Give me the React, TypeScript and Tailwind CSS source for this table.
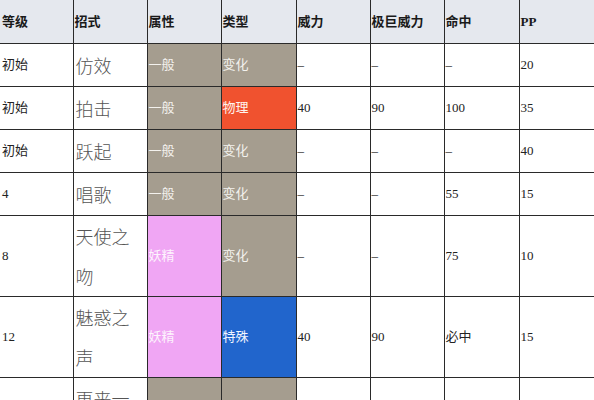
import type { ReactNode } from 'react';

type Tone = 'plain' | 'gray' | 'red' | 'pink' | 'blue';

interface Move {
    level: string;
    name: string;
    attr: string;
    attrTone: Tone;
    kind: string;
    kindTone: Tone;
    power: string;
    maxPower: string;
    accuracy: string;
    pp: string;
    tall?: boolean;
}

const moves: Move[] = [
    { level: '初始', name: '仿效', attr: '一般', attrTone: 'gray', kind: '变化', kindTone: 'gray', power: '–', maxPower: '–', accuracy: '–', pp: '20' },
    { level: '初始', name: '拍击', attr: '一般', attrTone: 'gray', kind: '物理', kindTone: 'red', power: '40', maxPower: '90', accuracy: '100', pp: '35' },
    { level: '初始', name: '跃起', attr: '一般', attrTone: 'gray', kind: '变化', kindTone: 'gray', power: '–', maxPower: '–', accuracy: '–', pp: '40' },
    { level: '4', name: '唱歌', attr: '一般', attrTone: 'gray', kind: '变化', kindTone: 'gray', power: '–', maxPower: '–', accuracy: '55', pp: '15' },
    { level: '8', name: '天使之吻', attr: '妖精', attrTone: 'pink', kind: '变化', kindTone: 'gray', power: '–', maxPower: '–', accuracy: '75', pp: '10', tall: true },
    { level: '12', name: '魅惑之声', attr: '妖精', attrTone: 'pink', kind: '特殊', kindTone: 'blue', power: '40', maxPower: '90', accuracy: '必中', pp: '15', tall: true },
    { level: '16', name: '再来一次', attr: '一般', attrTone: 'gray', kind: '变化', kindTone: 'gray', power: '–', maxPower: '–', accuracy: '100', pp: '5', tall: true },
];

const headers = ['等级', '招式', '属性', '类型', '威力', '极巨威力', '命中', 'PP'];
const widths = ['w-[73px]', 'w-[74px]', 'w-[74px]', 'w-[75px]', 'w-[74px]', 'w-[74px]', 'w-[75px]', 'w-[75px]'];

const toneClass: Record<Tone, string> = {
    plain: 'bg-white text-[#222]',
    gray: 'bg-[#a59d8f] text-[#f4f2ee]',
    red: 'bg-[#f0522f] text-[#fff4ee]',
    pink: 'bg-[#f0a6f4] text-[#fdf4fd]',
    blue: 'bg-[#2165cc] text-[#f2f6ff]',
};

function Cell({ children, tone = 'plain', first, tall }: { children: ReactNode; tone?: Tone; first?: boolean; tall?: boolean }) {
    return (
        <td
            className={`${tall ? 'h-[81px]' : 'h-[43px]'} border border-[#2a2a2a] p-0 pl-[1px] align-middle text-[13px] ${toneClass[tone]} ${first ? 'border-l-0 pl-[2px]' : ''}`}
        >
            {children}
        </td>
    );
}

export default function App() {
    return (
        <div className="h-[400px] w-[594px] overflow-hidden bg-white" style={{ fontFamily: '"Liberation Serif", "Noto Sans CJK SC", serif' }}>
            <table className="w-[594px] table-fixed border-collapse">
                <colgroup>
                    {widths.map((w, i) => (
                        <col key={i} className={w} />
                    ))}
                </colgroup>
                <thead>
                    <tr>
                        {headers.map((h, i) => (
                            <th
                                key={h}
                                className={`h-[43px] border border-t-0 border-[#2a2a2a] bg-[#e5e8ee] p-0 pl-[1px] text-left align-middle text-[13px] font-bold text-[#1a1a1a] ${i === 0 ? 'border-l-0 pl-[2px]' : ''}`}
                            >
                                {h}
                            </th>
                        ))}
                    </tr>
                </thead>
                <tbody>
                    {moves.map((m) => (
                        <tr key={m.name}>
                            <Cell first tall={m.tall}>{m.level}</Cell>
                            <Cell tall={m.tall}>
                                <span className="block pl-[1px] text-[18px] leading-[40px] font-light text-[#555]" style={{ fontFamily: '"Noto Sans CJK SC", sans-serif' }}>
                                    {m.name}
                                </span>
                            </Cell>
                            <Cell tone={m.attrTone} tall={m.tall}>{m.attr}</Cell>
                            <Cell tone={m.kindTone} tall={m.tall}>{m.kind}</Cell>
                            <Cell tall={m.tall}>{m.power}</Cell>
                            <Cell tall={m.tall}>{m.maxPower}</Cell>
                            <Cell tall={m.tall}>{m.accuracy}</Cell>
                            <Cell tall={m.tall}>{m.pp}</Cell>
                        </tr>
                    ))}
                </tbody>
            </table>
        </div>
    );
}
